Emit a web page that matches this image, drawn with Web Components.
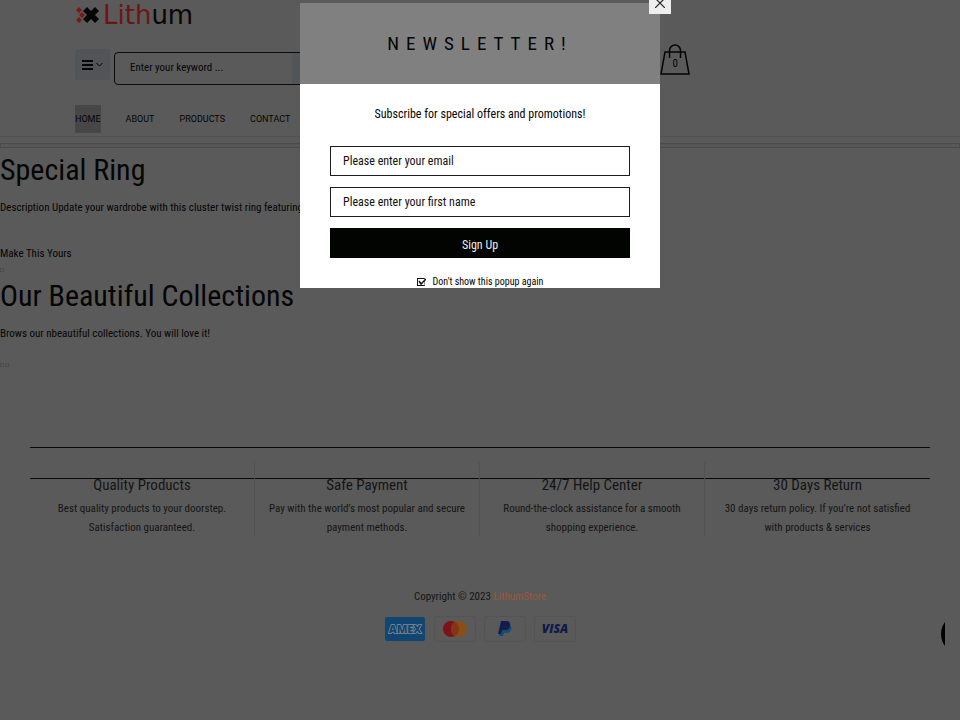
<!DOCTYPE html>
<html lang="en">
<head>
<meta charset="utf-8">
<meta name="viewport" content="width=device-width, initial-scale=1">
<title>LithumStore</title>
<style>
    body {
        margin: 0;
        background: #5a5a5a;
        color: #050505;
        font: 11px/18px "Roboto Condensed", Roboto, sans-serif;
    }
</style>
</head>
<body>
<lithum-page>
    <lithum-header slot="header"></lithum-header>
    <lithum-intro heading="Special Ring">
        Description Update your wardrobe with this cluster twist ring featuring
        <a slot="action" href="#ring">Make This Yours</a>
    </lithum-intro>
    <lithum-intro heading="Our Beautiful Collections" dots="2">
        Brows our nbeautiful collections. You will love it!
    </lithum-intro>
    <lithum-features slot="footer">
        <lithum-feature heading="Quality Products">Best quality products to your doorstep. Satisfaction guaranteed.</lithum-feature>
        <lithum-feature heading="Safe Payment">Pay with the world’s most popular and secure payment methods.</lithum-feature>
        <lithum-feature heading="24/7 Help Center">Round-the-clock assistance for a smooth shopping experience.</lithum-feature>
        <lithum-feature heading="30 Days Return">30 days return policy. If you’re not satisfied with products &amp; services</lithum-feature>
    </lithum-features>
    <lithum-footer slot="footer"></lithum-footer>
</lithum-page>
<lithum-chat></lithum-chat>
<lithum-newsletter></lithum-newsletter>

<script>
// small base: every element just provides its own html
class LithumElement extends HTMLElement {
    constructor() {
        super();
        this.attachShadow({ mode: 'open' });
    }
    connectedCallback() {
        this.shadowRoot.innerHTML = this.html();
    }
}

class LithumPage extends LithumElement {
    html() {
        return `
            <style>
                :host { display: block; }
                main { padding-top: 3px; }
                footer { padding: 0 30px; margin-top: 75px; }
            </style>
            <slot name="header"></slot>
            <main><slot></slot></main>
            <footer><slot name="footer"></slot></footer>
        `;
    }
}

class LithumHeader extends LithumElement {
    html() {
        return `
            <style>
                :host { display: block; }
                * { box-sizing: border-box; }
                a { color: inherit; text-decoration: none; }
                .top { padding: 0 28% 0 75px; }
                .logo {
                    display: flex;
                    align-items: center;
                    gap: 4px;
                    height: 30px;
                    font: 26px/30px "DejaVu Sans", sans-serif;
                    color: #0a0606;
                }
                .logo b { font-weight: 400; color: #6e1414; }
                .bar {
                    display: flex;
                    align-items: flex-start;
                    gap: 4px;
                    padding-top: 14px;
                }
                .menu {
                    display: flex;
                    align-items: center;
                    justify-content: center;
                    gap: 3px;
                    width: 35px;
                    height: 31px;
                    margin-top: 5px;
                    padding: 0;
                    border: 0;
                    border-radius: 3px;
                    background: #525558;
                }
                form {
                    display: flex;
                    flex: 1;
                    height: 33px;
                    margin-top: 8px;
                    border: 1px solid #0c0c0c;
                    border-radius: 4px;
                    overflow: hidden;
                }
                input {
                    width: 177px;
                    padding: 0 15px 2px;
                    border: 0;
                    background: none;
                    font: inherit;
                    color: inherit;
                    outline: 0;
                }
                input::placeholder { color: inherit; opacity: 1; }
                form button { flex: 1; border: 0; background: #525558; }
                .cart { position: relative; display: block; width: 31px; height: 31px; }
                .cart span {
                    position: absolute;
                    left: 0;
                    right: 1px;
                    top: 11px;
                    text-align: center;
                }
                .cart svg { display: block; }
                nav {
                    display: flex;
                    gap: 25px;
                    padding: 20px 75px 3px;
                    border-bottom: 1px solid #525252;
                    font: 9px/28px Roboto, sans-serif;
                }
                nav a.active { background: #474747; }
                .strip { height: 5px; margin-top: 6px; border: 1px solid #4b4b4b; background: #575757; }
            </style>
            <div class="top">
                <a class="logo" href="#">
                    <svg width="24" height="16" viewBox="0 0 24 16">
                        <path d="M4 0l3 3-3 3-3-3zM4 10l3 3-3 3-3-3zM7 5l3 3-3 3-3-3z" fill="#7a1616"/>
                        <path d="M12 0l4 4 4-4 4 4-4 4 4 4-4 4-4-4-4 4-4-4 4-4-4-4z" fill="#050505"/>
                    </svg>
                    <span><b>Lith</b>um</span>
                </a>
                <div class="bar">
                    <button class="menu" aria-label="Categories">
                        <svg width="11" height="10" viewBox="0 0 11 10"><path d="M0 1h11M0 5h11M0 9h11" stroke="#050505" stroke-width="2"/></svg>
                        <svg width="7" height="5" viewBox="0 0 7 5"><path d="M.5 1l3 3 3-3" fill="none" stroke="#050505"/></svg>
                    </button>
                    <form>
                        <input type="text" aria-label="Search" placeholder="Enter your keyword ...">
                        <button type="button" aria-label="Search"></button>
                    </form>
                    <a class="cart" href="#cart">
                        <svg width="30" height="31" viewBox="0 0 30 31" fill="none" stroke="#050505" stroke-width="1.5">
                            <path d="M5 8h20l4 22H1z"/>
                            <path d="M9.500 14V6.500a5.500 5.500 0 0 1 11 0V14"/>
                        </svg>
                        <span>0</span>
                    </a>
                </div>
            </div>
            <nav>
                <a class="active" href="#home">HOME</a>
                <a href="#about">ABOUT</a>
                <a href="#products">PRODUCTS</a>
                <a href="#contact">CONTACT</a>
            </nav>
            <div class="strip"></div>
        `;
    }
}

class LithumIntro extends LithumElement {
    html() {
        const dots = Number(this.getAttribute('dots') || 1);
        return `
            <style>
                :host { display: block; }
                h2 { margin: 0; font-weight: 400; font-size: 30px; line-height: 38px; }
                p { margin: 10px 0 0; line-height: 18px; }
                .action { margin-top: 28px; }
                ::slotted(a) { color: inherit; text-decoration: none; }
                .action.empty { margin-top: 15px; }
                .dots { display: flex; gap: 1px; padding: 5px 0; }
                .dots i { width: 4px; height: 4px; box-sizing: border-box; border: 1px solid #4d4d4d; }
            </style>
            <h2>${this.getAttribute('heading')}</h2>
            <p><slot></slot></p>
            <div class="action${dots > 1 ? ' empty' : ''}"><slot name="action"></slot></div>
            <div class="dots">${'<i></i>'.repeat(dots)}</div>
        `;
    }
}

class LithumFeatures extends LithumElement {
    html() {
        return `
            <style>
                :host { display: block; border-top: 1px solid #0a0a0a; padding-top: 30px; }
                .line { border-top: 1px solid #0a0a0a; }
                .grid { display: grid; grid-template-columns: repeat(4, 1fr); margin-top: -17px; }
            </style>
            <div class="line"></div>
            <div class="grid"><slot></slot></div>
        `;
    }
}

class LithumFeature extends LithumElement {
    html() {
        return `
            <style>
                :host {
                    display: block;
                    padding: 13px 12px 0;
                    border-right: 1px solid #525252;
                    text-align: center;
                    color: #151515;
                }
                :host(:last-child) { border-right: 0; }
                h3 { margin: 0 0 4px; font-weight: 400; font-size: 15px; line-height: 20px; }
                p { margin: 0; line-height: 19px; }
            </style>
            <h3>${this.getAttribute('heading')}</h3>
            <p><slot></slot></p>
        `;
    }
}

class LithumFooter extends LithumElement {
    html() {
        return `
            <style>
                :host { display: block; padding: 51px 0 60px; text-align: center; color: #151515; }
                a { color: #9a5640; text-decoration: none; }
                .cards { display: flex; justify-content: center; gap: 8px; margin-top: 10px; }
                svg { display: block; }
                text { font-family: "Open Sans", sans-serif; font-weight: 800; }
            </style>
            <div>Copyright © 2023 <a href="#store">LithumStore</a></div>
            <div class="cards">
                <svg width="42" height="26" viewBox="0 0 42 26">
                    <rect x="1" y="1" width="40" height="24" rx="2" fill="#124672"/>
                    <text x="21" y="17" font-size="11" text-anchor="middle" fill="#124672" stroke="#85898d" stroke-width="1.500" paint-order="stroke">AMEX</text>
                </svg>
                <svg width="42" height="26" viewBox="0 0 42 26">
                    <rect x=".5" y=".5" width="41" height="25" rx="2" fill="#5a5a5a" stroke="#545454"/>
                    <circle cx="17" cy="13" r="8" fill="#7a1418"/>
                    <circle cx="25" cy="13" r="8" fill="#875018"/>
                    <path d="M21 6a8 8 0 0 1 0 14a8 8 0 0 1 0-14z" fill="#853514"/>
                </svg>
                <svg width="42" height="26" viewBox="0 0 42 26">
                    <rect x=".5" y=".5" width="41" height="25" rx="2" fill="#5a5a5a" stroke="#545454"/>
                    <path d="M18 8h6q4 1 3 6q-1 3-5 3h-2l-1 3h-4z" fill="#174b70"/>
                    <path d="M17 5h6q4 1 3 5q-1 4-5 4h-3l-1 4h-3z" fill="#101f4e"/>
                </svg>
                <svg width="42" height="26" viewBox="0 0 42 26">
                    <rect x=".5" y=".5" width="41" height="25" rx="2" fill="#5a5a5a" stroke="#545454"/>
                    <text x="21" y="17" font-size="12" font-style="italic" text-anchor="middle" fill="#10194a">VISA</text>
                </svg>
            </div>
        `;
    }
}

// round launcher, mostly cut off by its own frame
class LithumChat extends LithumElement {
    html() {
        return `
            <style>
                :host {
                    position: fixed;
                    right: 15px;
                    bottom: 66px;
                    width: 4px;
                    height: 40px;
                    overflow: hidden;
                }
                button { width: 40px; height: 40px; padding: 0; border: 0; border-radius: 50%; background: #000; }
            </style>
            <button aria-label="Chat"></button>
        `;
    }
}

class LithumNewsletter extends LithumElement {
    html() {
        return `
            <style>
                :host {
                    position: absolute;
                    top: 3px;
                    left: 0;
                    right: 0;
                    display: flex;
                    justify-content: center;
                }
                * { box-sizing: border-box; }
                section { position: relative; width: 360px; background: #fff; }
                h2 {
                    margin: 0;
                    height: 81px;
                    background: #808080;
                    font-weight: 400;
                    font-size: 19px;
                    line-height: 82px;
                    letter-spacing: 7px;
                    text-align: center;
                }
                .close {
                    position: absolute;
                    top: -11px;
                    right: -11px;
                    width: 22px;
                    height: 22px;
                    padding: 6px;
                    border: 0;
                    background: #eee;
                }
                .close svg { display: block; }
                form { display: grid; padding: 20px 30px 0; font-size: 12px; }
                p { margin: 0 0 22px; line-height: 20px; text-align: center; }
                input[type=text], input[type=email] {
                    width: 100%;
                    height: 30px;
                    margin-bottom: 11px;
                    padding: 0 12px;
                    border: 1px solid #1c1c1c;
                    font: inherit;
                    color: #111;
                    background: #fff;
                    outline: 0;
                }
                input::placeholder { color: #111; opacity: 1; }
                .submit {
                    height: 30px;
                    padding: 3px 0 0;
                    border: 0;
                    background: #020402;
                    color: #eee;
                    font: inherit;
                }
                label {
                    display: flex;
                    align-items: center;
                    justify-content: center;
                    gap: 7px;
                    height: 30px;
                    padding-top: 17px;
                    font-size: 10px;
                    line-height: 14px;
                }
                input[type=checkbox] {
                    appearance: none;
                    width: 8px;
                    height: 8px;
                    margin: 0;
                    border: 1px solid #111;
                    border-right-color: #999;
                }
                .box { display: grid; }
                .box > * { grid-area: 1 / 1; }
                .box svg { pointer-events: none; }
            </style>
            <section role="dialog" aria-labelledby="title">
                <h2 id="title">NEWSLETTER!</h2>
                <button class="close" aria-label="Close">
                    <svg width="10" height="10" viewBox="0 0 10 10"><path d="M0 0l10 10M10 0L0 10" stroke="#222" stroke-width="1.200"/></svg>
                </button>
                <form>
                    <p>Subscribe for special offers and promotions!</p>
                    <input type="email" aria-label="Email" placeholder="Please enter your email">
                    <input type="text" aria-label="First name" placeholder="Please enter your first name">
                    <button class="submit" type="button">Sign Up</button>
                    <label>
                        <span class="box">
                            <input type="checkbox" checked>
                            <svg width="9" height="8" viewBox="0 0 9 8"><path d="M2 3l2 3 5-5" fill="none" stroke="#111" stroke-width="1.500"/></svg>
                        </span>
                        Don't show this popup again
                    </label>
                </form>
            </section>
        `;
    }
}

customElements.define('lithum-page', LithumPage);
customElements.define('lithum-header', LithumHeader);
customElements.define('lithum-intro', LithumIntro);
customElements.define('lithum-features', LithumFeatures);
customElements.define('lithum-feature', LithumFeature);
customElements.define('lithum-footer', LithumFooter);
customElements.define('lithum-chat', LithumChat);
customElements.define('lithum-newsletter', LithumNewsletter);
</script>
</body>
</html>
